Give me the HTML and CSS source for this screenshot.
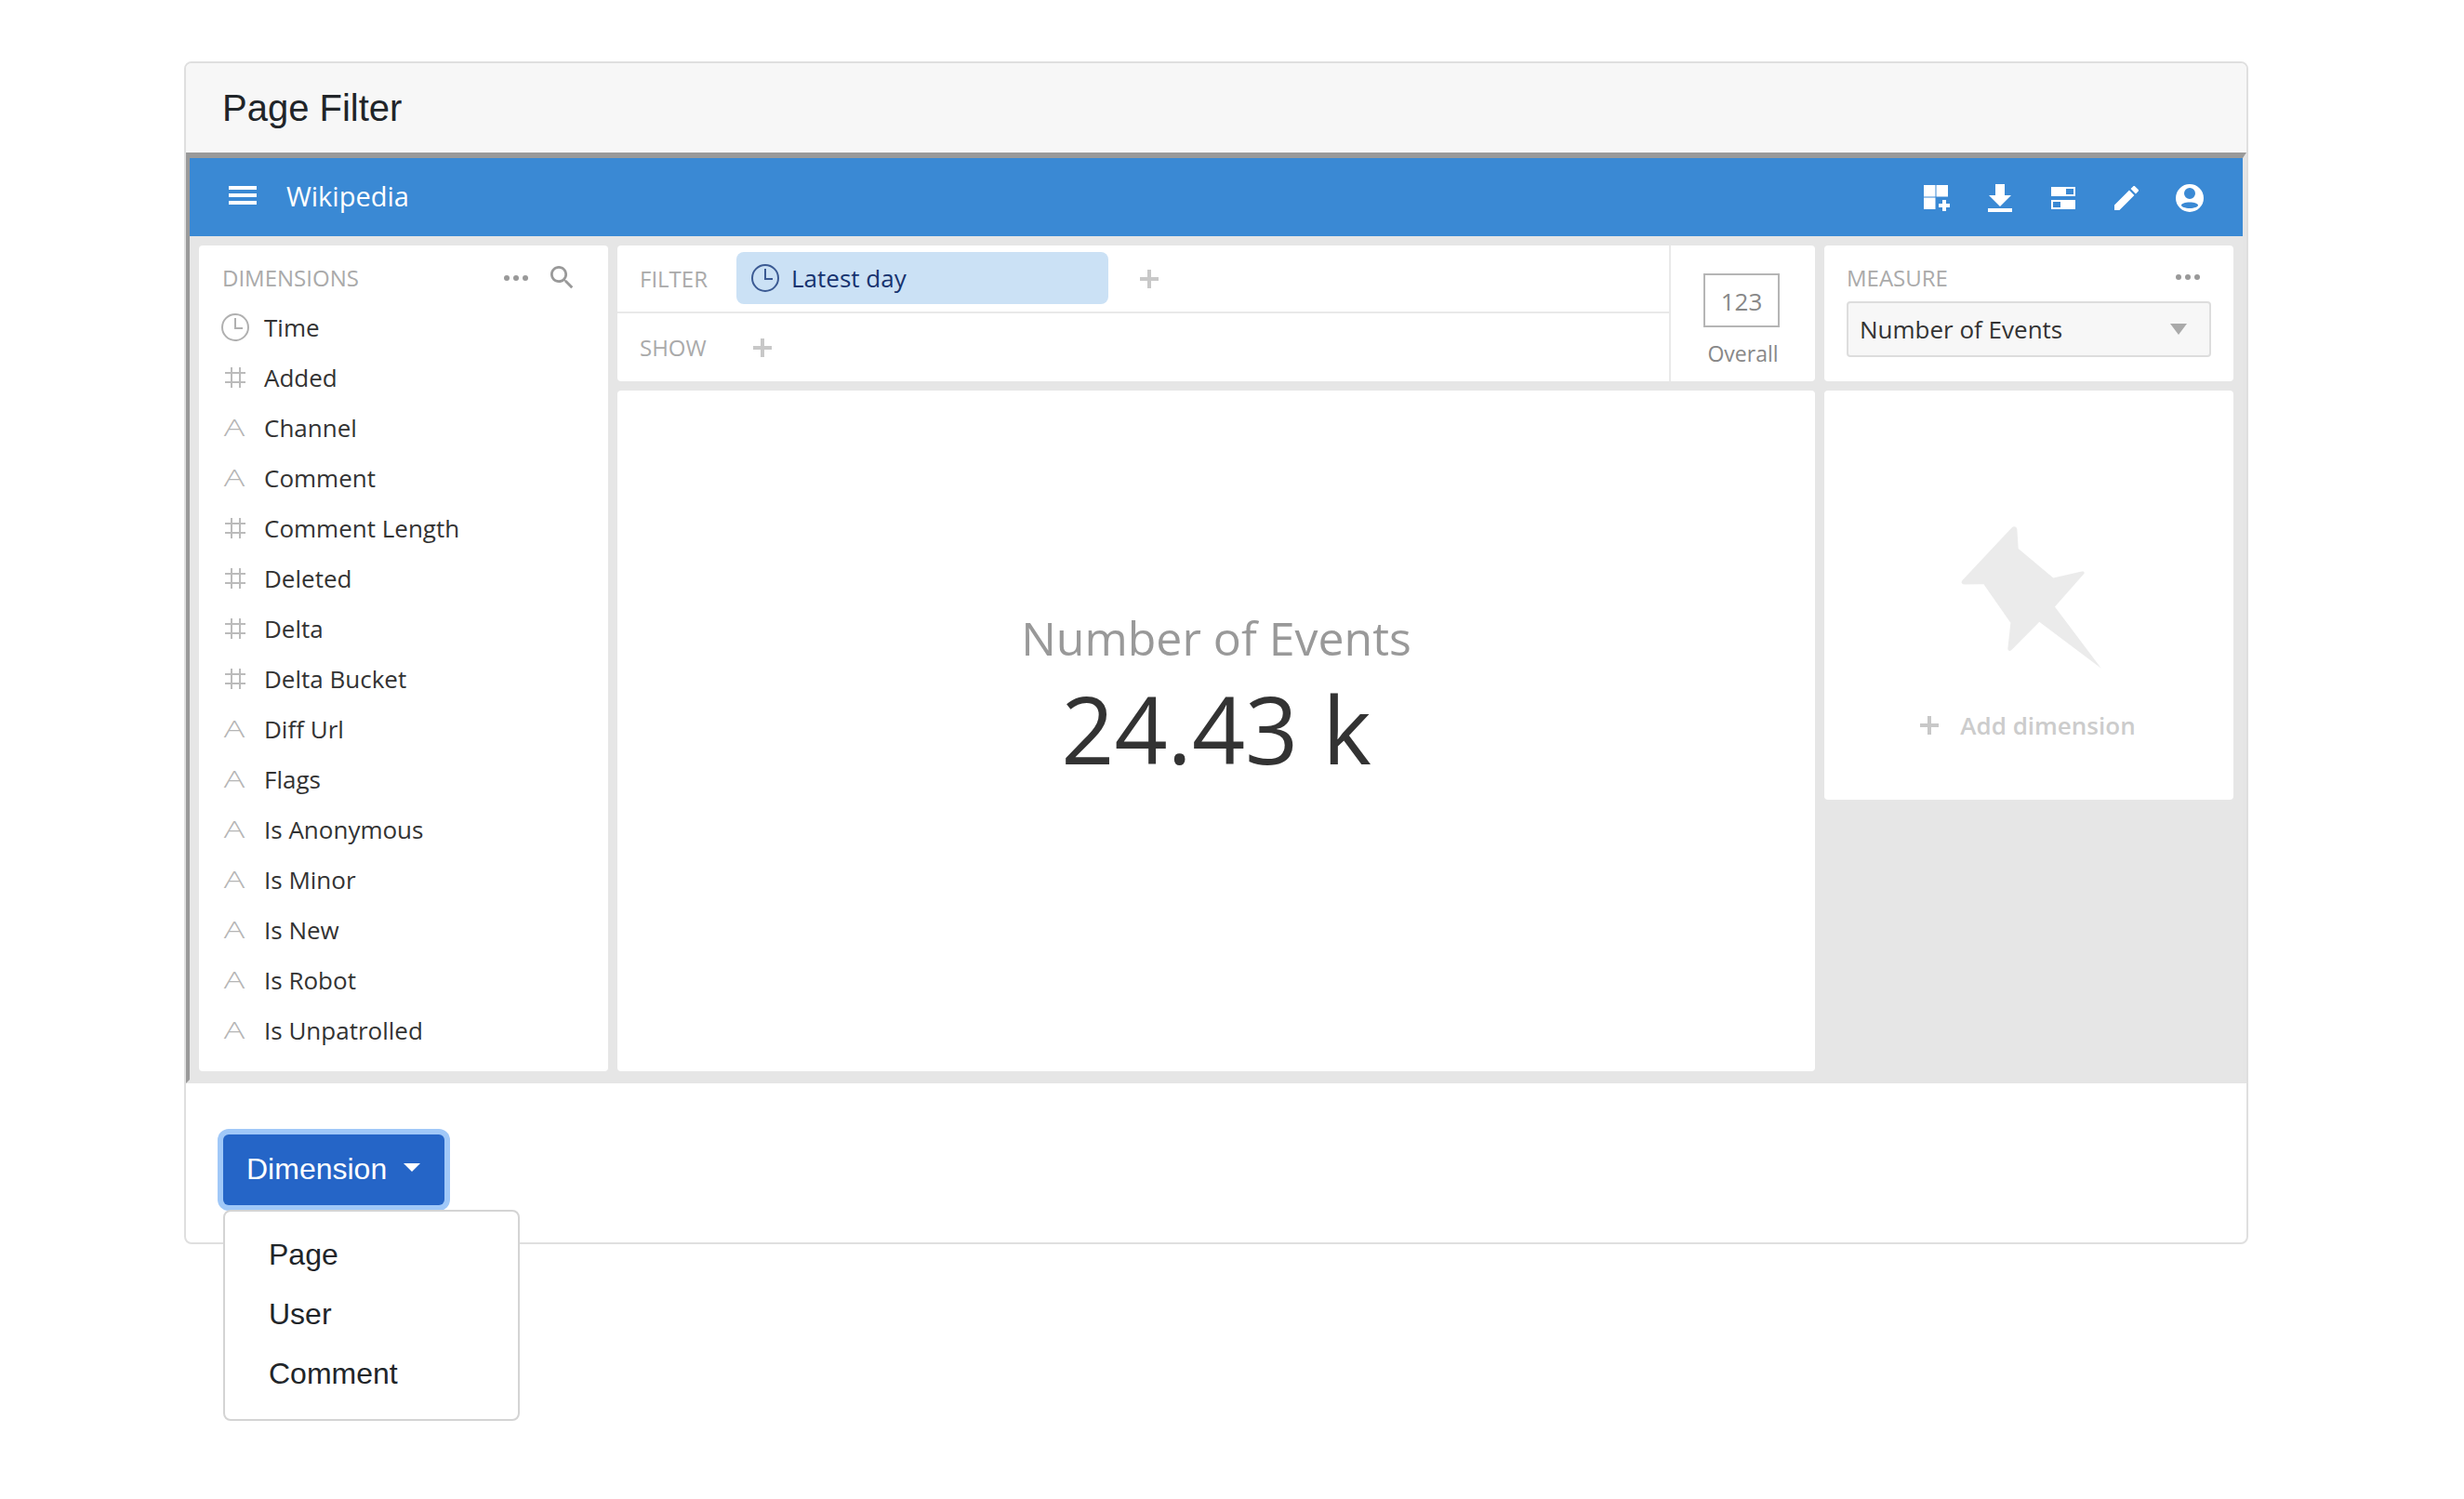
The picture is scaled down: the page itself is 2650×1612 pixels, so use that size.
FILE: index.html
```html
<!DOCTYPE html>
<html lang="en">
<head>
    <meta charset="UTF-8">
    <title>Page Filter</title>
    <link rel="stylesheet" href="styles.css">
</head>
<body>
    <svg class="defs" width="0" height="0">
        <symbol id="clock" viewBox="0 0 30 30">
            <circle cx="15" cy="15" r="14" fill="none" stroke="currentColor" stroke-width="2"/>
            <path d="M15 5v11h8" fill="none" stroke="currentColor" stroke-width="2"/>
        </symbol>
        <symbol id="hash" viewBox="0 0 22 22">
            <path d="M7 0v22M16 0v22M0 6h22M0 16h22" fill="none" stroke="currentColor" stroke-width="2"/>
        </symbol>
        <symbol id="dots" viewBox="0 0 26 6">
            <circle cx="3" cy="3" r="3"/><circle cx="13" cy="3" r="3"/><circle cx="23" cy="3" r="3"/>
        </symbol>
        <symbol id="plus" viewBox="0 0 20 20">
            <path d="M8 0h4v8h8v4h-8v8H8v-8H0V8h8z"/>
        </symbol>
    </svg>

    <div class="page-card">
        <div class="card-header">Page Filter</div>
        <div class="frame">
            <div class="topbar">
                <svg class="menu-icon" viewBox="0 0 30 20"><path d="M0 0h30v4H0zM0 8h30v4H0zM0 16h30v4H0z"/></svg>
                <span class="brand">Wikipedia</span>
                <div class="topbar-actions">
                    <span class="action"><svg width="28" height="28" viewBox="0 0 28 28"><path d="M0 0h12.5v12.5H0zM13.5 0H26v12.5H13.5zM0 13.5h12.5V26H0zM20 16h4v4h4v4h-4v4h-4v-4h-4v-4h4z"/></svg></span>
                    <span class="action"><svg width="26" height="30" viewBox="0 0 26 30"><path d="M8 0h10v12h7L13 24 1 12h7zM0 26h26v4H0z"/></svg></span>
                    <span class="action"><svg width="26" height="24" viewBox="0 0 26 24"><path fill-rule="evenodd" d="M0 0h26v10H0zM16 2v6h8V2zM0 14h26v10H0zM2 16v6h8v-6z"/></svg></span>
                    <span class="action"><svg width="26" height="26" viewBox="3 3 18 18"><path d="M3 17.25V21h3.75L17.81 9.94l-3.75-3.75L3 17.25zM20.71 7.04c.39-.39.39-1.02 0-1.41l-2.34-2.34c-.39-.39-1.02-.39-1.41 0l-1.83 1.83 3.75 3.75 1.83-1.83z"/></svg></span>
                    <span class="action"><svg width="30" height="30" viewBox="0 0 30 30"><path fill-rule="evenodd" d="M15 0a15 15 0 1 1 0 30a15 15 0 1 1 0-30zM15 4a6 6 0 1 0 0 12a6 6 0 1 0 0-12zM15 19.500c-5 0-9 1.600-9 3.200c0 1.600 4 3.200 9 3.200s9-1.600 9-3.200c0-1.600-4-3.200-9-3.200z"/></svg></span>
                </div>
            </div>

            <div class="workspace">
                <div class="panel dimensions">
                    <div class="panel-title">
                        <span class="label">Dimensions</span>
                        <svg class="dots"><use href="#dots"/></svg>
                        <svg class="search" viewBox="3 3 18 18"><path d="M15.5 14h-.79l-.28-.27C15.41 12.59 16 11.11 16 9.5 16 5.91 13.09 3 9.5 3S3 5.91 3 9.5 5.91 16 9.5 16c1.61 0 3.09-.59 4.23-1.57l.27.28v.79l5 4.99L20.49 19l-4.99-5zm-6 0C7.01 14 5 11.99 5 9.5S7.01 5 9.5 5 14 7.01 14 9.5 11.99 14 9.5 14z"/></svg>
                    </div>
                    <ul class="dim-list">
                        <li><svg class="type-icon clock-icon"><use href="#clock"/></svg>Time</li>
                        <li><svg class="type-icon"><use href="#hash"/></svg>Added</li>
                        <li><span class="type-a">A</span>Channel</li>
                        <li><span class="type-a">A</span>Comment</li>
                        <li><svg class="type-icon"><use href="#hash"/></svg>Comment Length</li>
                        <li><svg class="type-icon"><use href="#hash"/></svg>Deleted</li>
                        <li><svg class="type-icon"><use href="#hash"/></svg>Delta</li>
                        <li><svg class="type-icon"><use href="#hash"/></svg>Delta Bucket</li>
                        <li><span class="type-a">A</span>Diff Url</li>
                        <li><span class="type-a">A</span>Flags</li>
                        <li><span class="type-a">A</span>Is Anonymous</li>
                        <li><span class="type-a">A</span>Is Minor</li>
                        <li><span class="type-a">A</span>Is New</li>
                        <li><span class="type-a">A</span>Is Robot</li>
                        <li><span class="type-a">A</span>Is Unpatrolled</li>
                    </ul>
                </div>

                <div class="panel filters">
                    <div class="filter-rows">
                        <div class="filter-row">
                            <span class="label row-label">Filter</span>
                            <div class="pill">
                                <svg class="pill-clock"><use href="#clock"/></svg>
                                Latest day
                            </div>
                            <svg class="plus pill-plus"><use href="#plus"/></svg>
                        </div>
                        <div class="filter-row">
                            <span class="label row-label">Show</span>
                            <svg class="plus show-plus"><use href="#plus"/></svg>
                        </div>
                    </div>
                    <div class="overall">
                        <div class="overall-box">123</div>
                        <div class="overall-label">Overall</div>
                    </div>
                </div>

                <div class="panel measure">
                    <div class="panel-title measure-title">
                        <span class="label">Measure</span>
                        <svg class="dots"><use href="#dots"/></svg>
                    </div>
                    <div class="select">
                        Number of Events
                        <span class="select-arrow"></span>
                    </div>
                </div>

                <div class="panel viz">
                    <div class="viz-title">Number of Events</div>
                    <div class="viz-value">24.43 k</div>
                </div>

                <div class="panel pin-panel">
                    <svg class="pin" viewBox="264 108 456 460"><path d="M430 113c7-7 17-5 18 5l4 62 113 95 92-21c8-2 11 4 6 9l-93 105 150 199-200-150-90 91c-6 6-13 3-12-6l9-82-87-125-62 1c-10 0-13-7-6-14z"/></svg>
                    <div class="add-dim">
                        <svg class="plus"><use href="#plus"/></svg>
                        Add dimension
                    </div>
                </div>
            </div>
        </div>

        <div class="card-footer">
            <div class="picker">
                <button class="picker-toggle">Dimension<span class="caret"></span></button>
                <div class="picker-menu">
                    <div class="picker-item">Page</div>
                    <div class="picker-item">User</div>
                    <div class="picker-item">Comment</div>
                </div>
            </div>
        </div>
    </div>
</body>
</html>
```

FILE: styles.css
```css
body {
    box-sizing: border-box;
    min-height: 100vh;
    margin: 0;
    padding: 66px 0 0 198px;
    background-color: #fff;
    font-family: "Liberation Sans", Arial, sans-serif;
}
.defs {
    position: absolute;
}
.page-card {
    box-sizing: border-box;
    width: 2220px;
    height: 1272px;
    border: 2px solid #dfdfdf;
    border-radius: 8px;
}
.card-header {
    height: 96px;
    padding-left: 39px;
    line-height: 96px;
    font-size: 40px;
    color: #212529;
    background-color: #f7f7f7;
    border-radius: 6px 6px 0 0;
}
.frame {
    border-style: solid;
    border-width: 6px 4px 4px 4px;
    border-color: #9a9a9a #e5e5e5 #e5e5e5 #9a9a9a;
    font-family: "Open Sans", sans-serif;
}
.topbar {
    display: flex;
    align-items: center;
    height: 84px;
    padding-left: 42px;
    color: #fff;
    background-color: #3a89d4;
}
.menu-icon {
    width: 30px;
    height: 20px;
    margin-top: -4px;
    fill: #fff;
}
.brand {
    margin-left: 32px;
    margin-top: -3px;
    font-size: 29px;
}
.topbar-actions {
    display: flex;
    margin-left: auto;
    padding-top: 2px;
    padding-right: 23px;
}
.action {
    display: flex;
    align-items: center;
    justify-content: center;
    width: 68px;
    height: 34px;
}
.action svg {
    fill: #fff;
}
.workspace {
    display: grid;
    grid-template-columns: 440px 1288px 440px;
    grid-template-rows: 146px 732px;
    gap: 10px;
    padding: 10px 10px 9px;
    background-color: #e6e6e6;
}
.panel {
    background-color: #fff;
    border-radius: 4px;
}
.dimensions {
    grid-row: 1 / 3;
    padding: 0 25px;
}
.panel-title {
    display: flex;
    align-items: center;
    height: 61px;
    padding-top: 8px;
    box-sizing: border-box;
}
.label {
    font-size: 24px;
    text-transform: uppercase;
    color: #aaa;
}
.dots {
    width: 26px;
    height: 6px;
    margin-left: auto;
    fill: #999;
}
.search {
    width: 25px;
    height: 25px;
    margin-left: 24px;
    margin-right: 12px;
    fill: #999;
}
.dim-list {
    margin: 0;
    padding: 0;
    list-style: none;
}
.dim-list li {
    display: flex;
    align-items: center;
    height: 54px;
    font-size: 26px;
    color: #333;
}
.type-icon {
    flex: none;
    width: 22px;
    height: 22px;
    margin-left: 3px;
    margin-right: 20px;
    color: #bbb;
}
.clock-icon {
    width: 30px;
    height: 30px;
    margin-left: -1px;
    margin-right: 16px;
    color: #b0b0b0;
}
.type-a {
    flex: none;
    width: 26px;
    margin-right: 19px;
    margin-top: -3px;
    font-size: 25px;
    font-weight: 300;
    text-align: center;
    color: #b5b5b5;
    transform: scaleX(1.5);
}
.filters {
    display: flex;
}
.filter-rows {
    flex: 1;
}
.filter-row {
    display: flex;
    align-items: center;
    height: 73px;
    padding-left: 24px;
    box-sizing: border-box;
}
.filter-row:first-child {
    border-bottom: 2px solid #e9e9e9;
}
.row-label {
    width: 104px;
}
.pill {
    display: flex;
    align-items: center;
    width: 400px;
    height: 56px;
    margin-top: -2px;
    padding-left: 16px;
    box-sizing: border-box;
    font-size: 26px;
    color: #17336f;
    background-color: #cbe1f5;
    border-radius: 8px;
}
.pill-clock {
    width: 30px;
    height: 30px;
    margin-right: 13px;
    color: #3b5a93;
}
.plus {
    width: 20px;
    height: 20px;
    fill: #c8c8c8;
}
.pill-plus {
    margin-left: 34px;
}
.show-plus {
    margin-left: 18px;
}
.overall {
    width: 155px;
    border-left: 2px solid #e9e9e9;
    text-align: center;
}
.overall-box {
    box-sizing: border-box;
    width: 82px;
    height: 58px;
    margin: 30px 0 0 35px;
    line-height: 56px;
    font-size: 26px;
    color: #888;
    border: 2px solid #b5b5b5;
}
.overall-label {
    margin-top: 13px;
    font-size: 23px;
    line-height: 30px;
    color: #888;
}
.measure {
    padding: 0 24px;
}
.measure-title {
    height: 60px;
    padding-right: 12px;
}
.select {
    display: flex;
    align-items: center;
    box-sizing: border-box;
    height: 60px;
    padding-left: 12px;
    font-size: 26px;
    color: #333;
    background-color: #f7f7f7;
    border: 2px solid #ddd;
    border-radius: 4px;
}
.select-arrow {
    margin-left: auto;
    margin-right: 24px;
    border-style: solid;
    border-width: 12px 9px 0;
    border-color: #aaa transparent transparent;
}
.viz {
    display: flex;
    flex-direction: column;
    align-items: center;
    padding-top: 231px;
    box-sizing: border-box;
}
.viz-title {
    font-size: 50px;
    line-height: 70px;
    color: #999;
}
.viz-value {
    margin-top: 3px;
    font-size: 100px;
    line-height: 118px;
    color: #333;
}
.pin-panel {
    display: flex;
    flex-direction: column;
    align-items: center;
    height: 440px;
    padding-top: 146px;
    box-sizing: border-box;
}
.pin {
    width: 152px;
    height: 153px;
    margin-left: 4px;
    fill: #ebebeb;
}
.add-dim {
    display: flex;
    align-items: center;
    margin-top: 43px;
    margin-left: -2px;
    font-size: 26px;
    font-weight: 600;
    color: #ccc;
}
.add-dim .plus {
    margin-right: 23px;
}
.card-footer {
    padding: 55px 0 0 40px;
}
.picker {
    position: relative;
}
.picker-toggle {
    display: flex;
    align-items: center;
    height: 76px;
    width: 238px;
    padding: 0 0 2px 25px;
    font-family: "Liberation Sans", Arial, sans-serif;
    font-size: 32px;
    color: #fff;
    background-color: #2565c7;
    border: none;
    border-radius: 6px;
    box-shadow: 0 0 0 6px #a0c8f8;
}
.caret {
    margin-left: 18px;
    margin-top: -4px;
    border-style: solid;
    border-width: 9px 9px 0;
    border-color: #fff transparent transparent;
}
.picker-menu {
    position: absolute;
    top: 81px;
    left: 0;
    box-sizing: border-box;
    width: 319px;
    height: 227px;
    padding: 14px 0;
    font-size: 32px;
    color: #212529;
    background-color: #fff;
    border: 2px solid #d4d4d4;
    border-radius: 8px;
}
.picker-item {
    height: 64px;
    padding-left: 47px;
    line-height: 64px;
}
```
